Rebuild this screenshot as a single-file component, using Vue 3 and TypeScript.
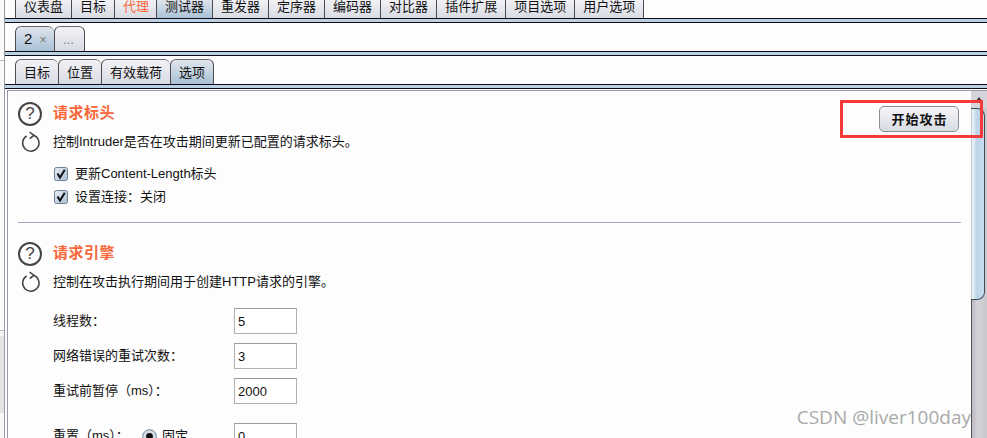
<script setup lang="ts">
type Tab = { label: string; active?: boolean; hot?: boolean }

const mainTabs: Tab[] = [
  { label: '仪表盘' },
  { label: '目标' },
  { label: '代理', hot: true },
  { label: '测试器', active: true },
  { label: '重发器' },
  { label: '定序器' },
  { label: '编码器' },
  { label: '对比器' },
  { label: '插件扩展' },
  { label: '项目选项' },
  { label: '用户选项' },
]

const subTabs: Tab[] = [
  { label: '目标' },
  { label: '位置' },
  { label: '有效载荷' },
  { label: '选项', active: true },
]

const checks = ['更新Content-Length标头', '设置连接：关闭']

const fields = [
  { label: '线程数：', value: '5' },
  { label: '网络错误的重试次数：', value: '3' },
  { label: '重试前暂停（ms）：', value: '2000' },
]
</script>

<template>
  <div class="app">
    <div class="edge"></div>
    <div class="main">
      <div class="tabs tabs-top">
        <div
          v-for="tab in mainTabs"
          :key="tab.label"
          class="tab"
          :class="{ active: tab.active, hot: tab.hot }"
        >
          {{ tab.label }}
        </div>
      </div>
      <div class="stripe"></div>

      <div class="tabs tabs-mid">
        <div class="tab tall active num">2 <span class="close">×</span></div>
        <div class="tab tall dots">...</div>
      </div>
      <div class="stripe"></div>

      <div class="tabs tabs-mid">
        <div
          v-for="tab in subTabs"
          :key="tab.label"
          class="tab tall"
          :class="{ active: tab.active }"
        >
          {{ tab.label }}
        </div>
      </div>
      <div class="stripe"></div>

      <div class="panel">
        <div class="content">
          <section class="block first">
            <div class="head">
              <div class="help">?</div>
              <h2>请求标头</h2>
            </div>
            <div class="desc">
              <svg class="reload" width="20" height="22" viewBox="0 0 20 22">
                <path d="M12.6 4.3A8.2 8.2 0 1 1 5.6 5" fill="none" stroke="#444" stroke-width="1.5" />
                <path d="M8.6 1.2 12.9 4.2 8.8 7.6" fill="none" stroke="#444" stroke-width="1.5" />
              </svg>
              <span>控制Intruder是否在攻击期间更新已配置的请求标头。</span>
            </div>
            <div class="checks">
              <label v-for="item in checks" :key="item" class="check">
                <svg width="14" height="14" viewBox="0 0 14 14">
                  <defs>
                    <linearGradient id="box" x1="0" y1="0" x2="1" y2="1">
                      <stop offset="0" stop-color="#e8eef4" />
                      <stop offset="1" stop-color="#a9c0d6" />
                    </linearGradient>
                  </defs>
                  <rect x="0.5" y="0.5" width="13" height="13" rx="2" fill="url(#box)" stroke="#6d7f92" />
                  <path d="M3.5 6.5 6 10.5 10.8 2.8" fill="none" stroke="#111" stroke-width="2" />
                </svg>
                <span>{{ item }}</span>
              </label>
            </div>
          </section>

          <hr class="rule" />

          <section class="block">
            <div class="head">
              <div class="help">?</div>
              <h2>请求引擎</h2>
            </div>
            <div class="desc">
              <svg class="reload" width="20" height="22" viewBox="0 0 20 22">
                <path d="M12.6 4.3A8.2 8.2 0 1 1 5.6 5" fill="none" stroke="#444" stroke-width="1.5" />
                <path d="M8.6 1.2 12.9 4.2 8.8 7.6" fill="none" stroke="#444" stroke-width="1.5" />
              </svg>
              <span>控制在攻击执行期间用于创建HTTP请求的引擎。</span>
            </div>
            <div class="form">
              <template v-for="field in fields" :key="field.label">
                <span class="label">{{ field.label }}</span>
                <input class="num-input" type="text" :value="field.value" readonly />
              </template>
              <span class="label last">
                <span class="label-text">重置（ms）：</span>
                <svg class="radio" width="15" height="15" viewBox="0 0 15 15">
                  <circle cx="7.5" cy="7.5" r="6.8" fill="#d5e0ea" stroke="#6d7f92" />
                  <circle cx="7.5" cy="7.5" r="3.4" fill="#111" />
                </svg>
                <span>固定</span>
              </span>
              <input class="num-input last" type="text" value="0" readonly />
            </div>
          </section>

          <div class="annotation">
            <button class="attack" type="button">开始攻击</button>
          </div>
        </div>

        <div class="scrollbar">
          <div class="arrow"></div>
          <div class="thumb"></div>
        </div>
      </div>
    </div>
    <div class="mark">CSDN @liver100day</div>
  </div>
</template>

<style>
html,
body {
  margin: 0;
  overflow: hidden;
  background: #fdfdfd;
}
</style>

<style scoped>
.app {
  position: relative;
  display: flex;
  width: 987px;
  height: 438px;
  overflow: hidden;
  background: #fdfdfd;
  color: #111;
  font: 13px/18px "Liberation Sans", "Noto Sans CJK SC", sans-serif;
}

.edge {
  flex: none;
  width: 4px;
  border-right: 1px solid #9a9aa0;
  background: linear-gradient(
    #fafafa 60px,
    #b8b8b8 60px,
    #b8b8b8 61px,
    #fafafa 61px,
    #fafafa 330px,
    #b8b8b8 330px,
    #b8b8b8 331px,
    #f4f4f4 331px,
    #f4f4f4 336px,
    #e4e4e4 336px,
    #e4e4e4 413px,
    #f8f8f8 413px
  );
}

.main {
  flex: 1;
  min-width: 0;
  display: flex;
  flex-direction: column;
}

.tabs {
  display: flex;
  padding-left: 10px;
  flex: none;
}

.tabs-top {
  height: 18px;
}

.tabs-mid {
  margin-top: 3px;
  height: 25px;
}

.tab {
  padding: 0 8px;
  border-left: 1px solid #4a4a50;
  background: linear-gradient(#f2f2f6, #d9dbe3);
  line-height: 13px;
  white-space: nowrap;
}

.tab:last-child {
  border-right: 1px solid #4a4a50;
}

.tab.active {
  background: linear-gradient(#e0e5ec, #a9c1d6);
}

.tab.hot {
  padding-right: 7px;
  color: #f9683a;
}

.tab.tall {
  border-top: 1px solid #6a6a70;
  border-radius: 6px 6px 0 0;
  line-height: 25px;
}

.tab.tall.num {
  width: 22px;
  font-size: 15px;
  line-height: 24px;
}

.close {
  color: #777;
  font-size: 12px;
  margin-left: 3px;
}

.dots {
  width: 13px;
  color: #6b7f96;
}

.stripe {
  flex: none;
  height: 3px;
  border-top: 1px solid #0c0c16;
  border-bottom: 1px solid #0c0c16;
  background: #bcd0e3;
}

.panel {
  flex: 1;
  min-height: 0;
  display: flex;
  margin: 1px 0 0 2px;
  border-top: 1px solid #9a9aa6;
}

.content {
  position: relative;
  width: 964px;
  flex: none;
  border-left: 1px solid #9a9aa6;
  box-sizing: border-box;
  padding: 0 10px 0 10px;
}

.block {
  padding-top: 19px;
}

.block.first {
  padding-top: 11px;
}

.head {
  display: flex;
  align-items: center;
  gap: 11px;
}

.help {
  width: 20px;
  height: 20px;
  border: 2px solid #444;
  border-radius: 50%;
  text-align: center;
  color: #444;
  font-size: 17px;
  line-height: 20px;
}

h2 {
  margin: -3px 0 0;
  color: #f9683a;
  font-size: 15px;
  font-weight: 700;
  letter-spacing: 0.5px;
}

.desc {
  display: flex;
  align-items: center;
  gap: 12px;
  height: 22px;
  margin-top: 5px;
  padding-left: 3px;
}

.checks {
  display: flex;
  flex-direction: column;
  gap: 5px;
  margin: 12px 0 0 36px;
}

.check {
  display: flex;
  align-items: center;
  gap: 7px;
}

.rule {
  height: 1px;
  margin: 16px 0 0;
  border: 0;
  background: #a9a9c0;
}

.form {
  display: grid;
  grid-template-columns: 181px 63px;
  gap: 9px 0;
  align-items: center;
  margin: 15px 0 0 35px;
}

.label.last {
  display: flex;
  align-items: center;
  gap: 5px;
  margin-top: 10px;
}

.label-text {
  flex: none;
  width: 84px;
}

.num-input {
  box-sizing: border-box;
  width: 63px;
  height: 26px;
  padding: 0 3px;
  border: 1px solid #b0b0b0;
  border-top-color: #9c9c9c;
  outline: none;
  background: #fff;
  color: #111;
  font: inherit;
}

.num-input.last {
  margin-top: 10px;
}

.annotation {
  position: absolute;
  top: 9px;
  right: -12px;
  box-sizing: border-box;
  display: flex;
  justify-content: flex-end;
  align-items: center;
  width: 143px;
  height: 38px;
  padding-right: 21px;
  border: 3px solid #f63a3a;
  z-index: 2;
}

.attack {
  width: 80px;
  height: 26px;
  padding: 0 0 0 1px;
  border: 1px solid #8a8d96;
  border-radius: 5px;
  background: linear-gradient(#f6f6f8, #d7dbe3);
  color: #111;
  font: 700 13px/18px "Noto Sans CJK SC", sans-serif;
  letter-spacing: 1px;
}

.scrollbar {
  flex: 1;
  display: flex;
  flex-direction: column;
  background: linear-gradient(90deg, #555 1px, #b9b9bf 1px, #d2d2d8 40%, #c9c9cf);
}

.arrow {
  position: relative;
  flex: none;
  height: 17px;
  background: #d4d4da;
}

.arrow::after {
  content: "";
  position: absolute;
  top: 6px;
  left: 5px;
  border: 3px solid transparent;
  border-top: 0;
  border-bottom: 4px solid #333;
}

.thumb {
  flex: none;
  height: 190px;
  margin-right: 2px;
  border: 1px solid #3e4a58;
  border-left: 0;
  border-radius: 0 8px 8px 0;
  background: linear-gradient(90deg, #c4c4c8 1px, #f4f7fa 1px, #bcd3e8 45%, #c8dcee);
}

.mark {
  position: absolute;
  right: 16px;
  bottom: 10px;
  color: #aaa;
  font: 19px/22px "Open Sans", sans-serif;
  z-index: 3;
}
</style>
